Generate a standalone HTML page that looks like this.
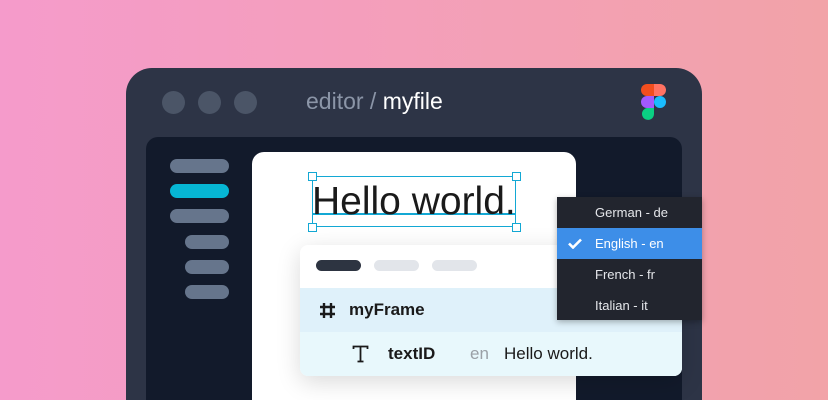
<!DOCTYPE html>
<html style="width:828px;height:400px;overflow:hidden"><head><style>
*{margin:0;padding:0;box-sizing:border-box}
body{width:828px;height:400px;overflow:hidden;position:relative;background:linear-gradient(90deg,#f59bcb,#f2a3a8);font-family:"Liberation Sans",sans-serif}
.a{position:absolute}
.win{left:126px;top:68px;width:576px;height:332px;background:#2d3446;border-radius:26px 26px 0 0}
.dot{width:23px;height:23px;border-radius:50%;background:#4b5567;top:91px}
.inner{left:146px;top:137px;width:536px;height:263px;background:#121a2b;border-radius:12px 12px 0 0}
.pill{height:14px;border-radius:7px;background:#66758c}
.card{left:252px;top:152px;width:324px;height:248px;background:#fff;border-radius:12px 12px 0 0}
.h{width:9px;height:9px;border:1.5px solid #13a8d4;background:#fff}
.dd{left:557px;top:197px;width:145px;height:123px;background:#22252e;color:#e5e7eb;font-size:13px;box-shadow:0 2px 6px rgba(0,0,0,.3)}
.dd div{height:31px;line-height:31px;padding-left:38px;position:relative}
.panel{left:300px;top:245px;width:382px;height:131px;background:#fff;border-radius:8px;overflow:hidden;box-shadow:0 6px 24px rgba(0,0,0,.15)}
</style></head><body>
<div class="a win"></div>
<div class="a dot" style="left:162px"></div>
<div class="a dot" style="left:198px"></div>
<div class="a dot" style="left:234px"></div>
<div class="a" style="left:306px;top:88px;font-size:23px;color:#8b95a7">editor / <span style="color:#fff">myfile</span></div>
<svg class="a" style="left:641px;top:84px" width="26" height="37" viewBox="0 0 26 37">
<path d="M6 0h7v12H6a6 6 0 0 1 0-12z" fill="#f24e1e"/>
<path d="M13 0h6a6 6 0 0 1 0 12h-6z" fill="#ff7262"/>
<path d="M6 12h7v12H6a6 6 0 0 1 0-12z" fill="#a259ff"/>
<circle cx="19" cy="18" r="6" fill="#1abcfe"/>
<path d="M6 24h7v6a6 6 0 1 1-7-6z" fill="#0acf83"/>
</svg>
<div class="a inner"></div>
<div class="a pill" style="left:170px;top:159px;width:59px"></div>
<div class="a pill" style="left:170px;top:184px;width:59px;background:#06b6d4"></div>
<div class="a pill" style="left:170px;top:209px;width:59px"></div>
<div class="a pill" style="left:185px;top:235px;width:44px"></div>
<div class="a pill" style="left:185px;top:260px;width:44px"></div>
<div class="a pill" style="left:185px;top:285px;width:44px"></div>
<div class="a card"></div>
<div class="a" style="left:312px;top:176px;width:204px;height:51px;border:1.5px solid #13a8d4"></div>
<div class="a" style="left:313px;top:213px;width:203px;height:1.5px;background:#13a8d4"></div>
<div class="a" style="left:312px;top:180px;font-size:39px;color:#1a1a1a">Hello world.</div>
<div class="a h" style="left:308px;top:172px"></div>
<div class="a h" style="left:512px;top:172px"></div>
<div class="a h" style="left:308px;top:223px"></div>
<div class="a h" style="left:512px;top:223px"></div>
<div class="a panel">
<div class="a" style="left:16px;top:15px;width:45px;height:11px;border-radius:6px;background:#2d3441"></div>
<div class="a" style="left:74px;top:15px;width:45px;height:11px;border-radius:6px;background:#e2e5ea"></div>
<div class="a" style="left:132px;top:15px;width:45px;height:11px;border-radius:6px;background:#e2e5ea"></div>
<div class="a" style="left:0;top:43px;width:382px;height:44px;background:#dff1fa"></div>
<div class="a" style="left:0;top:87px;width:382px;height:44px;background:#e8f8fc"></div>
<svg class="a" style="left:19px;top:57px" width="17" height="17" viewBox="0 0 17 17" stroke="#1a1a1a" stroke-width="2.4" fill="none"><path d="M5 1v15M12 1v15M1 5h15M1 12h15"/></svg>
<div class="a" style="left:49px;top:55px;font-size:17px;font-weight:bold;color:#1a1a1a">myFrame</div>
<svg class="a" style="left:52px;top:100px" width="17" height="18" viewBox="0 0 17 18" stroke="#1a1a1a" stroke-width="1.8" fill="none"><path d="M1.5 4V1.5h14V4M8.5 1.5v15M5.5 16.5h6"/></svg>
<div class="a" style="left:88px;top:99px;font-size:17px;font-weight:bold;color:#1a1a1a">textID</div>
<div class="a" style="left:170px;top:99px;font-size:17px;color:#9aa0a6">en</div>
<div class="a" style="left:204px;top:99px;font-size:17px;color:#1a1a1a">Hello world.</div>
</div>
<div class="a dd">
<div>German - de</div>
<div style="background:#3d8ee8;color:#fff"><svg class="a" style="left:11px;top:10px" width="14" height="11" viewBox="0 0 14 11"><path d="M1 5.5l4 4 8-8" stroke="#fff" stroke-width="2.6" fill="none"/></svg>English - en</div>
<div>French - fr</div>
<div>Italian - it</div>
</div>
</body></html>
